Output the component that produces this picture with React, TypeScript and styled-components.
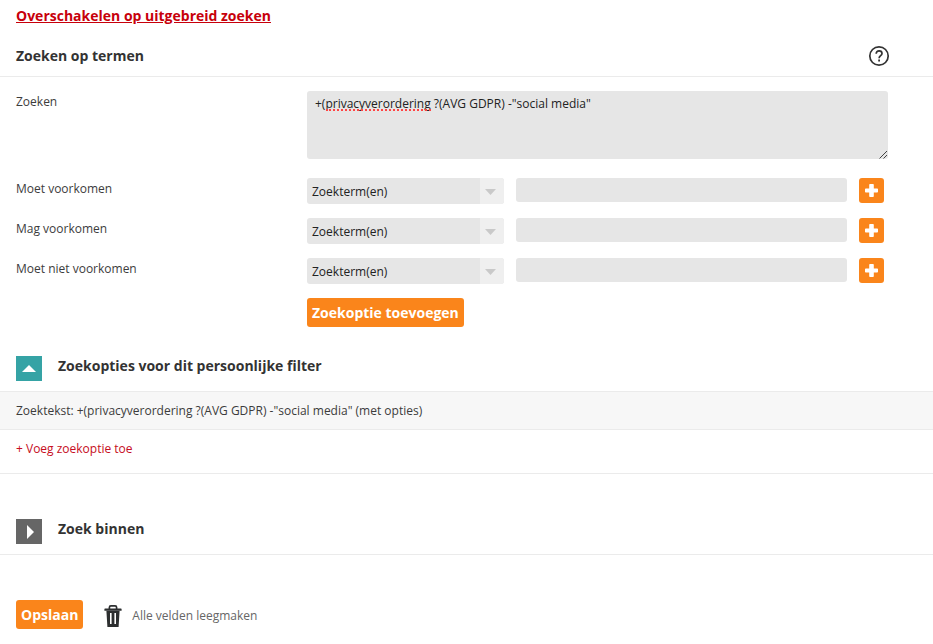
import React, { useState } from "react";
import styled, { createGlobalStyle } from "styled-components";

const GlobalStyle = createGlobalStyle`
  * { box-sizing: border-box; }
  body {
    margin: 0;
    background: #fff;
    color: #3c3c3c;
    font: 12px/20px "Open Sans", sans-serif;
  }
  button, input, select, textarea { font: inherit; }
`;

const Page = styled.main`
  display: flex;
  flex-direction: column;
`;

const SwitchRow = styled.div`
  padding: 6px 16px 0;
`;

const SwitchLink = styled.a`
  color: #c7000b;
  font-size: 14px;
  font-weight: 700;
`;

const Heading = styled.h2`
  margin: 0;
  font-size: 14px;
  line-height: 20px;
  font-weight: 700;
  color: #333;
`;

const TermsHeader = styled.header`
  display: flex;
  align-items: center;
  justify-content: space-between;
  height: 41px;
  margin-top: 9px;
  padding: 0 43px 0 16px;
  border-bottom: 1px solid #ebebeb;
`;

const IconButton = styled.button`
  display: flex;
  padding: 0;
  border: 0;
  background: none;
  cursor: pointer;
`;

const Form = styled.form`
  display: flex;
  flex-direction: column;
  gap: 14px;
  padding: 14px 45px 0 16px;
`;

const Field = styled.div<{ $spaced?: boolean }>`
  display: grid;
  grid-template-columns: 291px 1fr;
  align-items: start;
  margin-bottom: ${(p) => (p.$spaced ? 5 : 0)}px;
`;

const Label = styled.label`
  padding-top: 1px;
`;

const QueryBox = styled.div`
  position: relative;
  display: flex;
`;

const QueryInput = styled.textarea`
  flex: 1;
  height: 68px;
  padding: 3px 8px;
  border: 0;
  border-radius: 3px;
  background: #e6e6e6;
  color: #222;
  resize: none;
  outline: 0;
`;

const SpellingMark = styled.span`
  position: absolute;
  top: 18px;
  left: 19px;
  width: 105px;
  border-bottom: 2px dotted #ff4444;
  pointer-events: none;
`;

const Grip = styled.svg`
  position: absolute;
  right: 0;
  bottom: 0;
  pointer-events: none;
`;

const Controls = styled.div`
  display: flex;
  align-items: flex-start;
  gap: 12px;
  padding-right: 4px;
`;

const SelectBox = styled.div`
  position: relative;
  width: 197px;
  height: 26px;
  border-radius: 3px;
  overflow: hidden;
`;

const Select = styled.select`
  appearance: none;
  width: 100%;
  height: 26px;
  padding: 2px 28px 0 5px;
  border: 0;
  background: #e6e6e6;
  color: #222;
`;

const SelectArrow = styled.span`
  position: absolute;
  inset: 0 0 0 auto;
  display: flex;
  align-items: center;
  justify-content: center;
  width: 24px;
  padding: 2px 3px 0 0;
  background: #efefef;
  pointer-events: none;
`;

const TermInput = styled.input`
  flex: 1;
  min-width: 0;
  height: 24px;
  padding: 0 8px;
  border: 0;
  border-radius: 3px;
  background: #e6e6e6;
`;

const AddButton = styled.button`
  display: flex;
  align-items: center;
  justify-content: center;
  width: 25px;
  height: 25px;
  padding: 0;
  border: 0;
  border-radius: 3px;
  background: #fa851b;
  cursor: pointer;
`;

const ActionButton = styled.button`
  height: 29px;
  padding: 0 5px;
  border: 0;
  border-radius: 3px;
  background: #fa851b;
  color: #fff;
  font-size: 14px;
  font-weight: 700;
  cursor: pointer;
`;

const AddOptionRow = styled.div`
  padding-left: 291px;
`;

const SectionHeader = styled.header<{ $gap: number }>`
  display: flex;
  align-items: flex-start;
  gap: 16px;
  margin-top: ${(p) => p.$gap}px;
  padding: 0 16px 10px;
  border-bottom: 1px solid #ebebeb;
`;

const Toggle = styled.button<{ $open: boolean }>`
  display: flex;
  align-items: center;
  justify-content: center;
  width: 26px;
  height: 25px;
  padding: 0;
  border: 0;
  background: ${(p) => (p.$open ? "#35a3a5" : "#666")};
  cursor: pointer;
`;

const OptionRow = styled.div`
  padding: 9px 16px 8px;
  border-bottom: 1px solid #ebebeb;
  background: #f7f7f7;
`;

const AddLinkRow = styled.div`
  padding: 9px 16px 14px;
  border-bottom: 1px solid #ebebeb;
`;

const AddLink = styled.a`
  color: #c60c22;
  text-decoration: none;
`;

const Footer = styled.footer`
  display: flex;
  align-items: center;
  padding: 45px 16px 15px;
`;

const ClearButton = styled.button`
  display: flex;
  align-items: center;
  gap: 10px;
  height: 29px;
  margin-left: 21px;
  padding: 2px 0 0;
  border: 0;
  background: none;
  color: #666;
  cursor: pointer;
`;

const terms = ["Moet voorkomen", "Mag voorkomen", "Moet niet voorkomen"];

const HelpIcon = () => (
  <svg width="22" height="22" viewBox="0 0 22 22" fill="none" stroke="#333" aria-hidden="true">
    <circle cx="11" cy="11" r="9.2" strokeWidth="1.7" />
    <path d="M8.2 8.7C8.2 6.9 9.4 5.8 11.1 5.8S14 6.9 14 8.4c0 2.2-2.9 2.4-2.9 4.9" strokeWidth="1.7" />
    <path d="M11.1 14.6v2" strokeWidth="1.8" />
  </svg>
);

const PlusIcon = () => (
  <svg width="13" height="13" viewBox="0 0 13 13" aria-hidden="true">
    <path fill="#fff" d="M5 0h3q.8 0 .8.8v3.6h3.4q.8 0 .8.8v2.6q0 .8-.8.8H8.8v3.6q0 .8-.8.8H5q-.8 0-.8-.8V8.6H.8q-.8 0-.8-.8V5.2q0-.8.8-.8h3.4V.8Q4.2 0 5 0z" />
  </svg>
);

const TrashIcon = () => (
  <svg width="18" height="22" viewBox="0 0 18 22" aria-hidden="true">
    <path fill="none" stroke="#2d2f30" strokeWidth="1.7" d="M5.4 4V2.4q0-1.5 1.5-1.5h4.2q1.5 0 1.5 1.5V4" />
    <path fill="#2d2f30" d="M1 3.6h16q.6 0 .6 1v1.2H.4V4.6q0-1 .6-1z" />
    <path fill="#2d2f30" fillRule="evenodd" d="M2.4 5.8h13.2L14.6 22H3.4zM6 8v11h1.6V8zm4.4 0v11H12V8z" />
  </svg>
);

export default function App() {
  const [query, setQuery] = useState('+(privacyverordering ?(AVG GDPR) -"social media"');
  return (
    <Page>
      <GlobalStyle />
      <SwitchRow>
        <SwitchLink href="#uitgebreid">Overschakelen op uitgebreid zoeken</SwitchLink>
      </SwitchRow>
      <TermsHeader>
        <Heading>Zoeken op termen</Heading>
        <IconButton type="button" aria-label="Help">
          <HelpIcon />
        </IconButton>
      </TermsHeader>
      <Form>
        <Field $spaced>
          <Label htmlFor="query">Zoeken</Label>
          <QueryBox>
            <QueryInput id="query" spellCheck={false} value={query} onChange={(e) => setQuery(e.target.value)} />
            <SpellingMark />
            <Grip width="10" height="10" viewBox="0 0 10 10" stroke="#444" fill="none" aria-hidden="true">
              <path d="M1.5 9.5l7.5-7.5M5.5 9.5l3.5-3.5" />
            </Grip>
          </QueryBox>
        </Field>
        {terms.map((term, i) => (
          <Field key={term}>
            <Label htmlFor={`term-${i}`}>{term}</Label>
            <Controls>
              <SelectBox>
                <Select aria-label={`${term}: type`}>
                  <option>Zoekterm(en)</option>
                </Select>
                <SelectArrow>
                  <svg width="11" height="6" viewBox="0 0 11 6" aria-hidden="true">
                    <path fill="#c9c9c9" d="M0 0h11L5.5 6z" />
                  </svg>
                </SelectArrow>
              </SelectBox>
              <TermInput id={`term-${i}`} type="text" />
              <AddButton type="button" aria-label={`${term}: toevoegen`}>
                <PlusIcon />
              </AddButton>
            </Controls>
          </Field>
        ))}
        <AddOptionRow>
          <ActionButton type="button">Zoekoptie toevoegen</ActionButton>
        </AddOptionRow>
      </Form>
      <SectionHeader $gap={29}>
        <Toggle $open type="button" aria-expanded="true" aria-label="Zoekopties inklappen">
          <svg width="14" height="7" viewBox="0 0 14 7" aria-hidden="true">
            <path fill="#fff" d="M7 0l7 7H0z" />
          </svg>
        </Toggle>
        <Heading>Zoekopties voor dit persoonlijke filter</Heading>
      </SectionHeader>
      <OptionRow>Zoektekst: +(privacyverordering ?(AVG GDPR) -"social media" (met opties)</OptionRow>
      <AddLinkRow>
        <AddLink href="#zoekoptie">+ Voeg zoekoptie toe</AddLink>
      </AddLinkRow>
      <SectionHeader $gap={45}>
        <Toggle $open={false} type="button" aria-expanded="false" aria-label="Zoek binnen uitklappen">
          <svg width="9" height="14" viewBox="0 0 9 14" aria-hidden="true">
            <path fill="#fff" d="M2 0l7 7-7 7z" />
          </svg>
        </Toggle>
        <Heading>Zoek binnen</Heading>
      </SectionHeader>
      <Footer>
        <ActionButton type="submit">Opslaan</ActionButton>
        <ClearButton type="button">
          <TrashIcon />
          Alle velden leegmaken
        </ClearButton>
      </Footer>
    </Page>
  );
}
